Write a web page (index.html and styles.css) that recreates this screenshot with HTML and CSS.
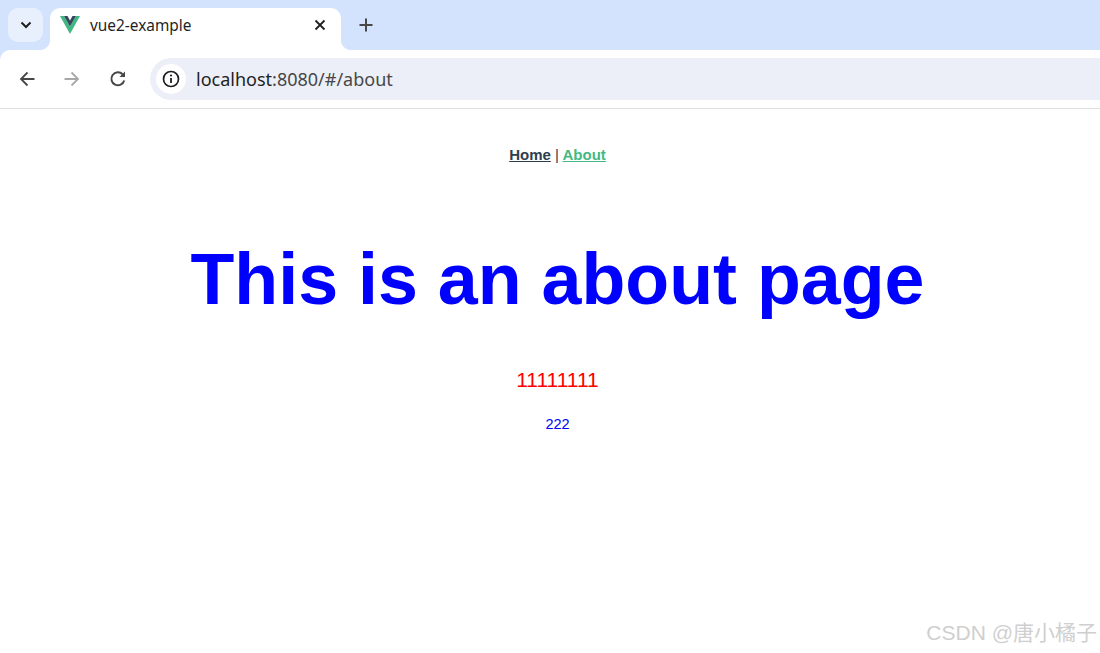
FILE: index.html
```html
<!DOCTYPE html>
<html lang="en">

<head>
    <meta charset="UTF-8" />
    <meta name="viewport" content="width=device-width, initial-scale=1.0" />
    <title>vue2-example</title>
    <link rel="stylesheet" href="styles.css">
</head>

<body>
    <!-- browser tabs -->
    <div class="tabbar">
        <button class="tab-search">
            <svg width="12" height="8" viewBox="0 0 12 8"><path d="M1.5 1.5 6 6l4.5-4.5" fill="none" stroke="#1f1f1f" stroke-width="2"/></svg>
        </button>
        <div class="tab">
            <svg class="favicon" width="20" height="18" viewBox="0 0 20 18">
                <path d="M0 0h4l6 10.500L16 0h4L10 18z" fill="#41b883"/>
                <path d="M4 0h3.500L10 4.500 12.500 0H16l-6 10.500z" fill="#34495e"/>
            </svg>
            <span class="tab-title">vue2-example</span>
            <svg class="tab-close" width="12" height="12" viewBox="0 0 12 12"><path d="M1.500 1.500l9 9M10.500 1.500l-9 9" stroke="#1f1f1f" stroke-width="1.800"/></svg>
        </div>
        <svg class="new-tab" width="14" height="14" viewBox="0 0 14 14"><path d="M7 .5v13M.5 7h13" stroke="#474747" stroke-width="2"/></svg>
    </div>

    <!-- address bar -->
    <div class="toolbar">
        <svg class="nav-icon" width="16" height="16" viewBox="0 0 16 16"><path d="M15.500 8H2M8.500 1.500 2 8l6.500 6.500" fill="none" stroke="#474747" stroke-width="1.800"/></svg>
        <svg class="nav-icon" width="16" height="16" viewBox="0 0 16 16"><path d="M.5 8H14M7.500 1.500 14 8l-6.500 6.500" fill="none" stroke="#a8a8a8" stroke-width="1.800"/></svg>
        <svg class="nav-icon" width="18" height="18" viewBox="0 0 18 18"><path d="M15.200 10.500A6.500 6.500 0 1 1 13.600 4.300" fill="none" stroke="#474747" stroke-width="2"/><path d="M16 1.500V7h-5.500z" fill="#474747"/></svg>
        <div class="omnibox">
            <span class="site-info">
                <svg width="18" height="18" viewBox="0 0 18 18"><circle cx="9" cy="9" r="7.500" fill="none" stroke="#1f1f1f" stroke-width="1.700"/><path d="M9 8v5" stroke="#1f1f1f" stroke-width="1.800"/><circle cx="9" cy="5.500" r="1.100" fill="#1f1f1f"/></svg>
            </span>
            <span class="url"><span class="url-host">localhost</span>:8080/#/about</span>
        </div>
    </div>

    <!-- page -->
    <main class="app">
        <nav class="app-nav">
            <a href="#/">Home</a> <span class="sep">|</span> <a class="current" href="#/about">About</a>
        </nav>
        <h1 class="title">This is an about page</h1>
        <p class="red-text">11111111</p>
        <p class="blue-text">222</p>
    </main>

    <div class="watermark">CSDN @唐小橘子</div>
</body>

</html>
```

FILE: styles.css
```css
html,
body {
    margin: 0;
    height: 100%;
    overflow: hidden;
    background-color: white;
}

body {
    position: relative;
    width: 1100px;
    height: 653px;
}

.tabbar {
    display: flex;
    align-items: flex-start;
    height: 60px;
    background-color: #d3e3fd;
}

.tab-search {
    display: flex;
    align-items: center;
    justify-content: center;
    width: 35px;
    height: 34px;
    margin: 8px 7px 0 8px;
    padding: 0;
    border: 0;
    border-radius: 10px;
    background-color: #e9f0fd;
}

.tab {
    position: relative;
    display: flex;
    align-items: center;
    width: 291px;
    height: 42px;
    margin-top: 8px;
    border-radius: 10px 10px 0 0;
    background-color: white;
    box-sizing: border-box;
    padding: 0 15px 8px 10px;
}

/* the curves where the tab meets the toolbar */
.tab::before,
.tab::after {
    content: "";
    position: absolute;
    bottom: 0;
    width: 10px;
    height: 10px;
}

.tab::before {
    left: -10px;
    background: radial-gradient(circle at 0 0, #d3e3fd 9.500px, white 10.500px);
}

.tab::after {
    right: -10px;
    background: radial-gradient(circle at 100% 0, #d3e3fd 9.500px, white 10.500px);
}

.favicon {
    flex-shrink: 0;
}

.tab-title {
    flex: 1;
    margin-left: 10px;
    font-family: "Noto Sans", "Open Sans", sans-serif;
    font-size: 15.400px;
    color: #1f1f1f;
}

.new-tab {
    margin: 18px 0 0 18px;
}

.toolbar {
    display: flex;
    align-items: center;
    height: 58px;
    margin-top: -10px;
    position: relative;
    border-bottom: 1px solid #e0e0e0;
    border-top-left-radius: 10px;
    background-color: white;
}

.nav-icon {
    flex-shrink: 0;
    margin-left: 19px;
    margin-right: 10px;
}

.omnibox {
    display: flex;
    align-items: center;
    flex: 1;
    height: 42px;
    margin-left: 13px;
    border-radius: 21px 0 0 21px;
    background-color: #eceff7;
}

.site-info {
    display: flex;
    align-items: center;
    justify-content: center;
    width: 30px;
    height: 30px;
    margin-left: 6px;
    border-radius: 50%;
    background-color: white;
}

.url {
    margin-left: 10px;
    font-family: "Noto Sans", "Open Sans", sans-serif;
    font-size: 18px;
    color: #474747;
}

.url-host {
    color: #1f1f1f;
}

.app {
    width: 1115px;
    font-family: "Liberation Sans", Arial, sans-serif;
    text-align: center;
}

.app-nav {
    padding-top: 37px;
    font-size: 15px;
    font-weight: bold;
    line-height: 17px;
    color: #2c3e50;
}

.app-nav a {
    color: #2c3e50;
}

.app-nav a.current {
    color: #42b983;
}

.sep {
    font-weight: normal;
}

.title {
    margin: 75px 0 0;
    font-size: 71.800px;
    line-height: 83px;
    color: blue;
}

.red-text {
    margin: 47px 0 0;
    font-size: 21px;
    line-height: 23px;
    color: red;
}

.blue-text {
    margin: 25px 0 0;
    font-size: 14.500px;
    line-height: 17px;
    color: blue;
}

.watermark {
    position: absolute;
    right: 3px;
    bottom: 7px;
    font-family: "Liberation Sans", "Noto Sans CJK SC", sans-serif;
    font-size: 21px;
    color: #cfcfcf;
}
```
